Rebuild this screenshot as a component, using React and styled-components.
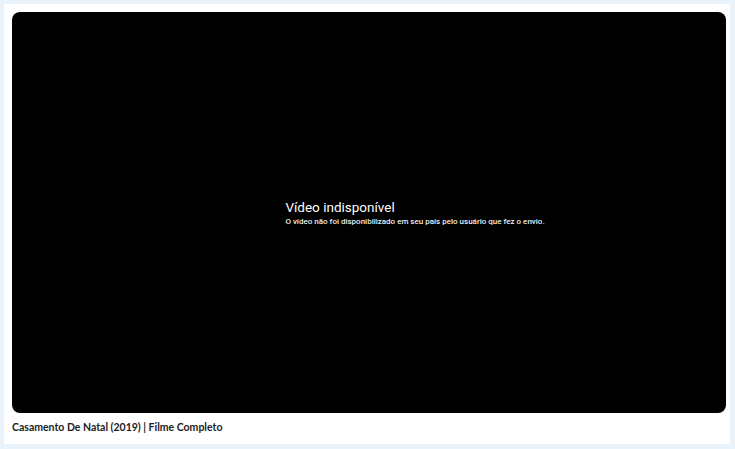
import styled, { createGlobalStyle } from "styled-components";

const GlobalStyle = createGlobalStyle`
  html, body {
    margin: 0;
    padding: 0;
    background: #eaf2fa;
  }
`;

const Page = styled.div`
  width: 735px;
  height: 449px;
  box-sizing: border-box;
  padding: 4px 5px 5px 4px;
`;

const Card = styled.div`
  height: 100%;
  box-sizing: border-box;
  background: #fff;
  padding: 8px 4px 0 8px;
  display: flex;
  flex-direction: column;
`;

const Player = styled.div`
  height: 401px;
  background: #000;
  border-radius: 8px;
  display: flex;
  align-items: center;
  justify-content: center;
`;

const Spacer = styled.div`
  width: 92px;
`;

const Message = styled.div`
  font-family: Roboto, "Liberation Sans", sans-serif;
  color: #fff;
`;

const Reason = styled.div`
  font-size: 13.5px;
  line-height: 17px;
`;

const Subreason = styled.div`
  font-size: 8px;
  font-weight: 500;
  line-height: 11px;
  color: #eee;
`;

const Title = styled.h2`
  margin: 0;
  padding-top: 8px;
  font-family: Lato, "Liberation Sans", sans-serif;
  font-size: 10.5px;
  font-weight: 700;
  color: #222;
`;

const App = () => {
  return (
    <>
      <GlobalStyle />
      <Page>
        <Card>
          <Player>
            <Spacer />
            <Message>
              <Reason>Vídeo indisponível</Reason>
              <Subreason>
                O vídeo não foi disponibilizado em seu país pelo usuário que fez o envio.
              </Subreason>
            </Message>
          </Player>
          <Title>Casamento De Natal (2019) | Filme Completo</Title>
        </Card>
      </Page>
    </>
  );
};

export default App;
